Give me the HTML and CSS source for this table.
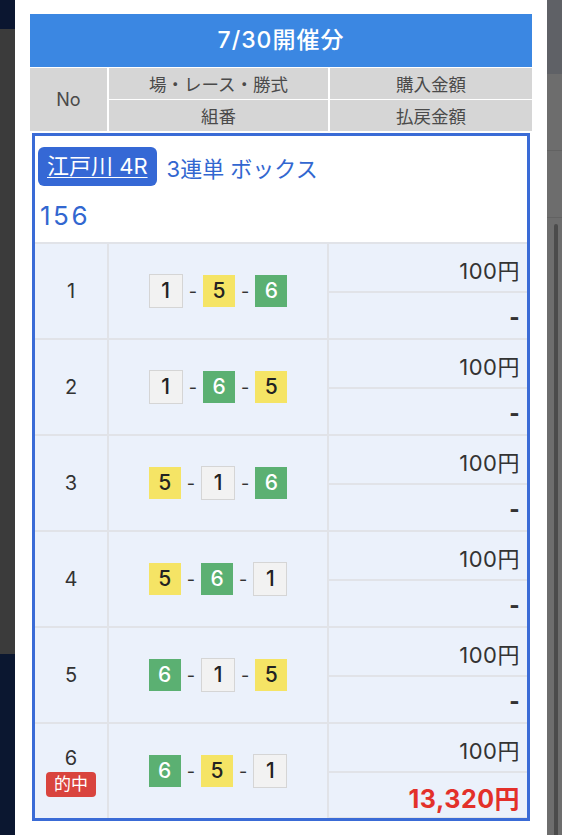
FILE: index.html
```html
<!DOCTYPE html>
<html lang="ja">
<head>
    <meta charset="UTF-8">
    <meta name="viewport" content="width=device-width, initial-scale=1.0">
    <title>購入履歴</title>
    <link rel="stylesheet" href="styles.css">
</head>
<body>
    <div class="screen">
        <div class="backdrop-left">
            <div class="bl-top"></div>
            <div class="bl-mid"></div>
            <div class="bl-bot"></div>
        </div>

        <div class="modal">
            <div class="sheet">
                <div class="sheet-title">7/30開催分</div>
                <div class="sheet-head">
                    <div class="hcell h-no">No</div>
                    <div class="hcell">場・レース・勝式</div>
                    <div class="hcell">購入金額</div>
                    <div class="hcell">組番</div>
                    <div class="hcell">払戻金額</div>
                </div>

                <div class="ticket">
                    <div class="ticket-info">
                        <div class="ticket-line">
                            <a class="race" href="#">江戸川 4R</a>
                            <span class="kind">3連単 ボックス</span>
                        </div>
                        <div class="ticket-combo">156</div>
                    </div>
                    <div class="bets" id="bets">
                        <!-- rows are added by the script -->
                    </div>
                </div>
            </div>
        </div>

        <div class="backdrop-right">
            <div class="br-top"></div>
            <div class="br-band"></div>
            <div class="br-band small"></div>
            <div class="br-rest">
                <div class="scrollbar"></div>
            </div>
        </div>
    </div>

    <script>
      // 買い目データ
      const bets = [
        { no: 1, combo: [1, 5, 6], amount: "100円", payout: "-" },
        { no: 2, combo: [1, 6, 5], amount: "100円", payout: "-" },
        { no: 3, combo: [5, 1, 6], amount: "100円", payout: "-" },
        { no: 4, combo: [5, 6, 1], amount: "100円", payout: "-" },
        { no: 5, combo: [6, 1, 5], amount: "100円", payout: "-" },
        { no: 6, combo: [6, 5, 1], amount: "100円", payout: "13,320円", hit: true },
      ];

      const boxClass = { 1: "w", 5: "y", 6: "g" };
      const table = document.getElementById("bets");

      function renderBets() {
        table.innerHTML = "";
        bets.forEach((bet) => {
          const boxes = bet.combo
            .map((n) => `<span class="box ${boxClass[n]}">${n}</span>`)
            .join('<span class="dash">-</span>');
          table.insertAdjacentHTML(
            "beforeend",
            `
            <div class="cell c-no">
              <span>${bet.no}</span>
              ${bet.hit ? '<span class="hit">的中</span>' : ""}
            </div>
            <div class="cell c-combo">${boxes}</div>
            <div class="cell c-amount">${bet.amount}</div>
            <div class="cell c-payout${bet.hit ? " win" : ""}">${bet.payout}</div>
          `
          );
        });
      }

      renderBets();
    </script>
</body>
</html>
```

FILE: styles.css
```css
body {
    margin: 0;
    padding: 0;
    font-family: Inter, "Noto Sans CJK JP", sans-serif;
    background-color: #3b3b3b;
}

.screen {
    display: grid;
    grid-template-columns: 15px 532px 15px;
    height: 835px;
    overflow: hidden;
}

/* 背景(モーダルの外側) */
.backdrop-left {
    display: flex;
    flex-direction: column;
}

.bl-top {
    height: 29px;
    background-color: #0b1630;
}

.bl-mid {
    height: 625px;
    background-color: #3b3b3b;
}

.bl-bot {
    flex: 1;
    background-color: #0b1730;
}

.backdrop-right {
    display: flex;
    flex-direction: column;
    background-color: #6d6d6d;
}

.br-top {
    height: 74px;
    background-color: #5f6166;
}

.br-band {
    height: 76px;
    border-bottom: 1px solid #626262;
}

.br-band.small {
    height: 66px;
}

.br-rest {
    flex: 1;
    display: flex;
    padding-top: 6px;
}

.scrollbar {
    width: 4px;
    margin-left: 7px;
    border-radius: 2px 2px 0 0;
    background-color: #4b4b4b;
}

/* モーダル */
.modal {
    background-color: #fff;
    padding: 14px 15px 0 15px;
}

.sheet-title {
    height: 53px;
    line-height: 53px;
    text-align: center;
    background-color: #3b87e2;
    color: #fff;
    font-size: 23px;
    font-weight: 500;
    letter-spacing: 1px;
}

.sheet-head {
    display: grid;
    grid-template-columns: 77px 219px 1fr;
    grid-template-rows: 31px 31px;
    gap: 1px 2px;
    padding-top: 1px;
    background-color: #fff;
}

.hcell {
    display: flex;
    align-items: center;
    justify-content: center;
    background-color: #d6d6d6;
    color: #4a4a4a;
    font-size: 17.5px;
}

.h-no {
    grid-row: span 2;
    font-size: 18px;
}

.ticket {
    margin: 2px 2px 0 2px;
    border: 3px solid #3a6bd6;
}

.ticket-info {
    height: 106px;
    padding: 11px 3px 0 3px;
    box-sizing: border-box;
}

.ticket-line {
    display: flex;
    align-items: center;
    height: 39px;
}

.race {
    display: inline-block;
    height: 39px;
    line-height: 38px;
    padding: 0 9px 0 9px;
    border-radius: 6px;
    background-color: #3568d5;
    color: #fff;
    font-size: 22px;
    text-underline-offset: 3px;
    text-decoration-thickness: 1px;
}

.kind {
    margin-left: 10px;
    color: #3267d0;
    font-size: 22px;
}

.ticket-combo {
    margin-top: 14px;
    padding-left: 2px;
    color: #3267d0;
    font-size: 26px;
    line-height: 32px;
    letter-spacing: 2.5px;
}

/* 買い目テーブル */
.bets {
    display: grid;
    grid-template-columns: 72px 218px 198px;
    grid-auto-rows: 47px 45px;
    gap: 2px;
    border-top: 2px solid #e1e3e8;
    background-color: #e1e3e8;
}

.cell {
    background-color: #ebf1fb;
    color: #333;
}

.c-no {
    grid-row: span 2;
    display: flex;
    flex-direction: column;
    align-items: center;
    justify-content: center;
    font-size: 20px;
}

.c-combo {
    grid-row: span 2;
    display: flex;
    align-items: center;
    justify-content: center;
    gap: 6px;
}

.c-amount, .c-payout {
    display: flex;
    align-items: center;
    justify-content: flex-end;
    padding: 3px 7px 0 0;
    font-size: 22px;
    letter-spacing: 0.5px;
}

.c-payout {
    font-weight: 800;
}

.c-payout.win {
    color: #e3302a;
    font-size: 25px;
    font-weight: 700;
}

.bets .cell:nth-last-child(1) {
    height: 41px;
}

.box {
    display: inline-block;
    width: 32px;
    height: 32px;
    line-height: 32px;
    text-align: center;
    font-size: 21px;
    font-weight: 500;
    color: #222;
}

.box.w {
    background-color: #f2f2f2;
    border: 1px solid #d5d5d5;
}

.box.y {
    background-color: #f5e465;
}

.box.g {
    background-color: #5bb072;
    color: #fff;
}

.dash {
    font-size: 18px;
    color: #333;
}

.hit {
    margin-top: 2px;
    padding: 0 8px;
    height: 25px;
    line-height: 25px;
    border-radius: 4px;
    background-color: #d9443e;
    color: #fff;
    font-size: 17px;
}
```
